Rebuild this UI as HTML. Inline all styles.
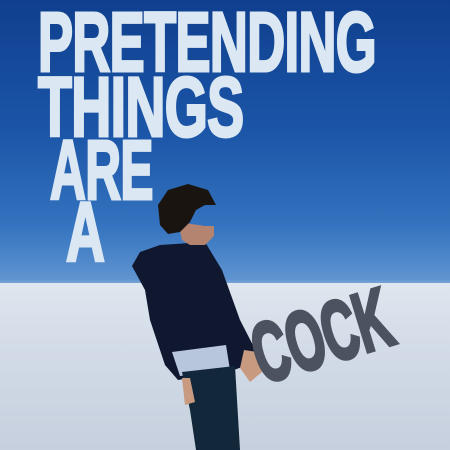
<!DOCTYPE html>
<html><head><style>
body{margin:0}
#c{width:450px;height:450px;position:relative;overflow:hidden;background:linear-gradient(#0f3f8e 0%,#1c56a8 30%,#3473bf 50%,#5e93d0 62%,#78a6d8 63%);}
#g{position:absolute;left:0;top:283px;width:450px;height:167px;background:linear-gradient(#dfe6ef,#d2dbe7 40%,#c6d0de);}
.t{position:absolute;font-family:"Liberation Sans",sans-serif;font-weight:bold;color:#dbe8f3;line-height:1;transform-origin:0 0;white-space:nowrap;letter-spacing:-1px;-webkit-text-stroke:3px #dbe8f3}
</style></head><body><div id="c">
<div id="g"></div>
<div class="t" style="left:38px;top:0px;font-size:84px;transform:scaleX(0.625)">PRETENDING</div>
<div class="t" style="left:38px;top:65px;font-size:84px;transform:scaleX(0.66)">THINGS</div>
<div class="t" style="left:50px;top:128px;font-size:84px;transform:scaleX(0.59)">ARE</div>
<div class="t" style="left:66px;top:190px;font-size:84px;transform:scaleX(0.64)">A</div>
<svg style="position:absolute;left:0;top:0" width="450" height="450">
<path d="M160 245 L140 252 L132 266 L145 290 L150 320 L165 365 L178 380 L228 372 L248 365 L258 355 L240 320 L222 270 L205 242 Z" fill="#101830"/>
<path d="M172 352 L226 345 L230 370 L180 376 Z" fill="#b8c6dc"/>
<path d="M182 372 L235 366 L240 450 L196 450 L190 410 Z" fill="#12283a"/>
<path d="M182 378 L190 378 L195 402 L185 405 Z" fill="#c89a80"/>
<path d="M244 350 L258 352 L262 372 L250 382 L240 368 Z" fill="#c89a80"/>
<path d="M178 222 L205 226 L214 226 L214 236 L205 245 L190 245 L182 240 Z" fill="#b58470"/>
<path d="M160 225 L158 205 L168 190 L188 184 L208 190 L216 205 L205 205 L196 210 L190 222 L180 232 L168 234 Z" fill="#1a1410"/>
</svg>
<div class="t" style="left:242px;top:316px;font-size:84px;color:#4c5260;-webkit-text-stroke:4px #4c5260;transform:rotate(-17deg) scaleX(0.57);letter-spacing:0">COCK</div>
</div></body></html>
